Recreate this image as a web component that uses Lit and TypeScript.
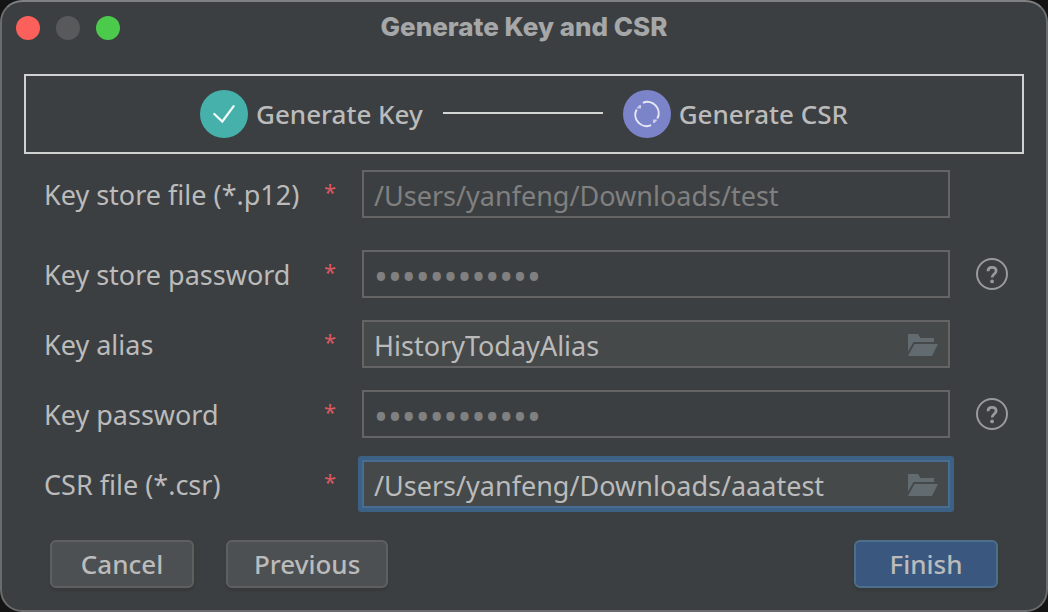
import { LitElement, html, css, svg, nothing } from "lit";
import { customElement } from "lit/decorators.js";
import { classMap } from "lit/directives/class-map.js";

interface Field {
  id: string;
  label: string;
  value: string;
  type: "text" | "password";
  disabled?: boolean;
  browse?: boolean;
  help?: boolean;
  focused?: boolean;
  spaced?: boolean;
}

const FIELDS: Field[] = [
  { id: "store-file", label: "Key store file (*.p12)", value: "/Users/yanfeng/Downloads/test", type: "text", disabled: true, spaced: true },
  { id: "store-password", label: "Key store password", value: "abcdefghijkl", type: "password", disabled: true, help: true },
  { id: "key-alias", label: "Key alias", value: "HistoryTodayAlias", type: "text", browse: true },
  { id: "key-password", label: "Key password", value: "abcdefghijkl", type: "password", disabled: true, help: true },
  { id: "csr-file", label: "CSR file (*.csr)", value: "/Users/yanfeng/Downloads/aaatest", type: "text", browse: true, focused: true },
];

const folderIcon = html`<svg width="30" height="24" viewBox="0 -2 30 24" aria-hidden="true">
  ${svg`<path d="M0 0h10l2.500 4H26v4H5.500L0 17.500z" fill="#626b6f"/><path d="M6.500 10H30l-6 12H0z" fill="#626b6f"/>`}
</svg>`;

const helpIcon = html`<svg width="32" height="32" viewBox="0 0 32 32" fill="none" aria-hidden="true">
  <circle cx="16" cy="16" r="15" stroke="#999a9b" stroke-width="2" />
  <path d="M12 13.200C12 10.500 13.500 9.300 16 9.300s4.100 1.300 4.100 3.600c0 3-4 3.200-4 6.600" stroke="#999a9b" stroke-width="2.800" />
  <circle cx="16.100" cy="23.400" r="1.900" fill="#999a9b" />
</svg>`;

const doneIcon = html`<svg width="48" height="48" viewBox="0 0 48 48" fill="none" aria-hidden="true">
  <circle cx="24" cy="24" r="24" fill="#46b1aa" />
  <path d="M14.300 24l8 7.500L33.700 16.200" stroke="#f3fafa" stroke-width="2.200" stroke-linecap="round" />
</svg>`;

const activeIcon = html`<svg width="48" height="48" viewBox="0 0 48 48" fill="none" aria-hidden="true">
  <circle cx="24" cy="24" r="24" fill="#7c84c9" />
  <g stroke="#e6e8f6" stroke-width="2">
    <path d="M19.900 12.800A11.300 11.300 0 0 1 34.300 28.600" />
    <path d="M28.100 35.200A11.300 11.300 0 0 1 13.700 19.400" />
  </g>
  <path d="M14 17.500L16.500 15h1.500v3.500h-4zM34 30.500L31.500 33H30v-3.500h4z" fill="#c8cceb" />
</svg>`;

@customElement("app-root")
export class AppRoot extends LitElement {
  static styles = css`
    :host {
      display: block;
      background: #141414;
      color: #bbbbbb;
      font-family: "Noto Sans", "Open Sans", sans-serif;
      font-size: 26px;
      font-weight: 500;
      line-height: 36px;
    }
    * {
      box-sizing: border-box;
    }
    .window {
      min-height: 100vh;
      border: 2px solid #696b6c;
      border-top-color: #7e8081;
      border-radius: 22px;
      background: #3c3f41;
    }
    .titlebar {
      display: grid;
      grid-template-columns: 1fr auto 1fr;
      align-items: center;
      height: 52px;
      padding: 0 14px;
    }
    .lights {
      display: flex;
      gap: 16px;
    }
    .light {
      width: 24px;
      height: 24px;
      padding: 0;
      border: 0;
      border-radius: 50%;
    }
    .close {
      background: #fc605b;
    }
    .minimize {
      background: #58595b;
    }
    .zoom {
      background: #4bca4b;
    }
    .title {
      margin: 0;
      padding-bottom: 2px;
      color: #a6a7a8;
      font: 800 26px/36px Inter, sans-serif;
    }
    .steps {
      display: flex;
      justify-content: center;
      align-items: center;
      gap: 20px;
      height: 80px;
      margin: 20px 22px 16px;
      border: 2px solid #d0d2d2;
    }
    .step {
      display: flex;
      align-items: center;
      gap: 8px;
    }
    .step svg,
    .help svg,
    .browse svg {
      display: block;
    }
    .line {
      width: 160px;
      height: 4px;
      border-top: 2px solid #d4d5d5;
    }
    .form {
      display: grid;
      gap: 22px;
      padding: 0 38px 0 42px;
      font-size: 27px;
      font-weight: 400;
    }
    .row {
      display: grid;
      grid-template-columns: 292px minmax(0, 1fr) 32px;
      column-gap: 26px;
      align-items: center;
    }
    .spaced {
      margin-bottom: 10px;
    }
    .caption {
      display: flex;
      justify-content: space-between;
      padding-top: 2px;
      white-space: nowrap;
    }
    .star {
      color: #db5860;
      font-size: 22px;
      line-height: 28px;
    }
    .box {
      display: flex;
      align-items: center;
      height: 48px;
      border: 2px solid #646464;
      padding: 0 10px;
    }
    .editable {
      background: #45494a;
    }
    .focused {
      border-color: #466d94;
      box-shadow: 0 0 0 4px #3d6185;
      border-radius: 1px;
    }
    .input {
      flex: 1;
      min-width: 0;
      height: 38px;
      padding: 2px 0 0;
      border: 0;
      outline: 0;
      background: none;
      color: #bbbbbb;
      font: inherit;
    }
    .input:disabled {
      color: #808080;
    }
    .secret {
      font-size: 37px;
    }
    .browse,
    .help {
      padding: 0;
      border: 0;
      background: none;
    }
    .footer {
      display: flex;
      gap: 32px;
      padding: 32px 48px 22px;
    }
    .button {
      height: 48px;
      padding: 0 26px;
      border: 2px solid #5e6060;
      border-radius: 6px;
      background: #4c5052;
      box-shadow: 0 3px 2px #37393a;
      color: #bbbbbb;
      font: inherit;
    }
    .narrow {
      width: 144px;
      padding: 0;
    }
    .primary {
      margin-left: auto;
      border-color: #4c708c;
      background: #3a587f;
    }
  `;

  private renderField(f: Field) {
    return html`<div class=${classMap({ row: true, spaced: !!f.spaced })}>
      <label class="caption" for=${f.id}><span>${f.label}</span><span class="star">*</span></label>
      <div class=${classMap({ box: true, editable: !f.disabled, focused: !!f.focused })}>
        <input
          class=${classMap({ input: true, secret: f.type === "password" })}
          id=${f.id}
          type=${f.type}
          .value=${f.value}
          ?disabled=${f.disabled}
          spellcheck="false"
        />
        ${f.browse ? html`<button class="browse" type="button" aria-label="Browse">${folderIcon}</button>` : nothing}
      </div>
      ${f.help ? html`<button class="help" type="button" aria-label="Help">${helpIcon}</button>` : nothing}
    </div>`;
  }

  render() {
    return html`<main class="window">
      <header class="titlebar">
        <div class="lights">
          <button class="light close" aria-label="Close"></button>
          <button class="light minimize" aria-label="Minimize" disabled></button>
          <button class="light zoom" aria-label="Zoom"></button>
        </div>
        <h1 class="title">Generate Key and CSR</h1>
      </header>
      <div class="steps">
        <div class="step">${doneIcon}<span>Generate Key</span></div>
        <div class="line"></div>
        <div class="step">${activeIcon}<span>Generate CSR</span></div>
      </div>
      <form class="form" @submit=${(e: Event) => e.preventDefault()}>${FIELDS.map((f) => this.renderField(f))}</form>
      <footer class="footer">
        <button class="button narrow" type="button">Cancel</button>
        <button class="button" type="button">Previous</button>
        <button class="button narrow primary" type="button">Finish</button>
      </footer>
    </main>`;
  }
}
